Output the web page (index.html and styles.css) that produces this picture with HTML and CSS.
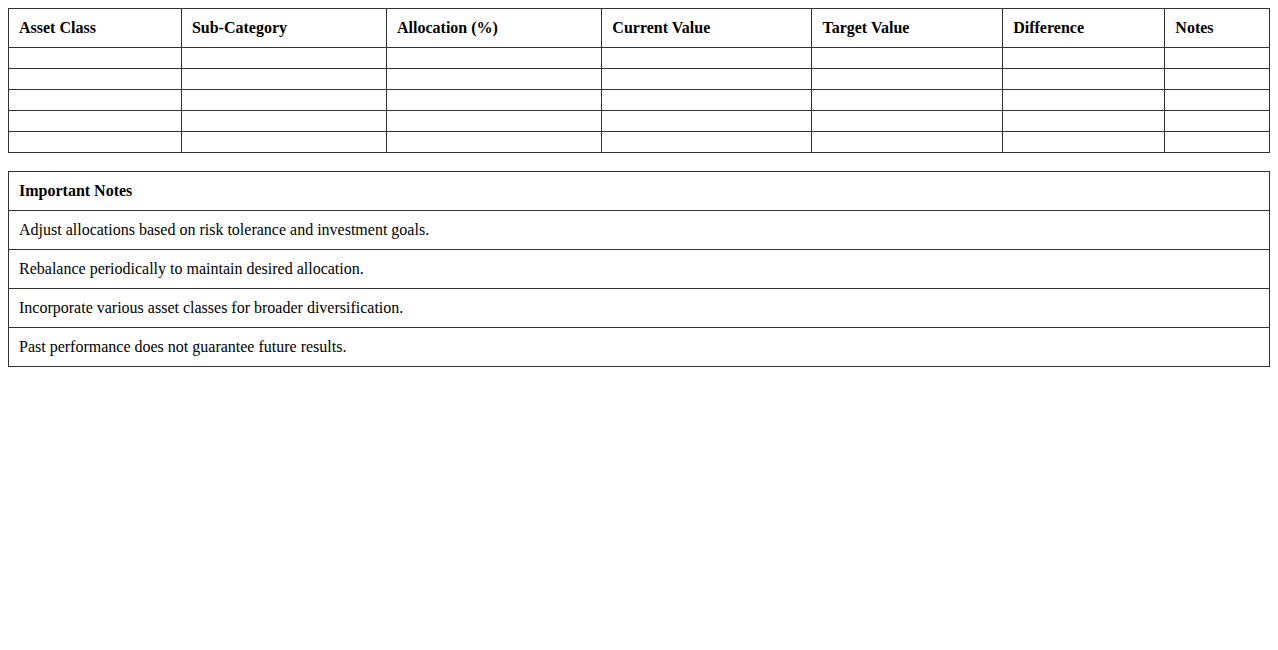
FILE: index.html
```html
<!DOCTYPE html>
<html lang="en">
<head>
<meta charset="utf-8">
<title>Asset Allocation</title>
<link rel="stylesheet" href="styles.css">
</head>
<body>
<table class="grid alloc">
  <thead>
    <tr>
      <th>Asset Class</th>
      <th>Sub-Category</th>
      <th>Allocation (%)</th>
      <th>Current Value</th>
      <th>Target Value</th>
      <th>Difference</th>
      <th>Notes</th>
    </tr>
  </thead>
  <tbody>
    <tr><td></td><td></td><td></td><td></td><td></td><td></td><td></td></tr>
    <tr><td></td><td></td><td></td><td></td><td></td><td></td><td></td></tr>
    <tr><td></td><td></td><td></td><td></td><td></td><td></td><td></td></tr>
    <tr><td></td><td></td><td></td><td></td><td></td><td></td><td></td></tr>
    <tr><td></td><td></td><td></td><td></td><td></td><td></td><td></td></tr>
  </tbody>
</table>
<table class="grid notes">
  <thead>
    <tr><th>Important Notes</th></tr>
  </thead>
  <tbody>
    <tr><td>Adjust allocations based on risk tolerance and investment goals.</td></tr>
    <tr><td>Rebalance periodically to maintain desired allocation.</td></tr>
    <tr><td>Incorporate various asset classes for broader diversification.</td></tr>
    <tr><td>Past performance does not guarantee future results.</td></tr>
  </tbody>
</table>
</body>
</html>
```
FILE: styles.css
```css
body {
  margin: 8px;
  font-family: "Liberation Serif", "Times New Roman", serif;
  font-size: 16px;
  color: #000;
  background: #fff;
}
.grid {
  width: 100%;
  border-collapse: collapse;
}
.grid th,
.grid td {
  border: 1px solid #333;
  padding: 10px;
  text-align: left;
}
.grid th {
  font-weight: bold;
}
.alloc {
  margin-bottom: 18px;
}
```
